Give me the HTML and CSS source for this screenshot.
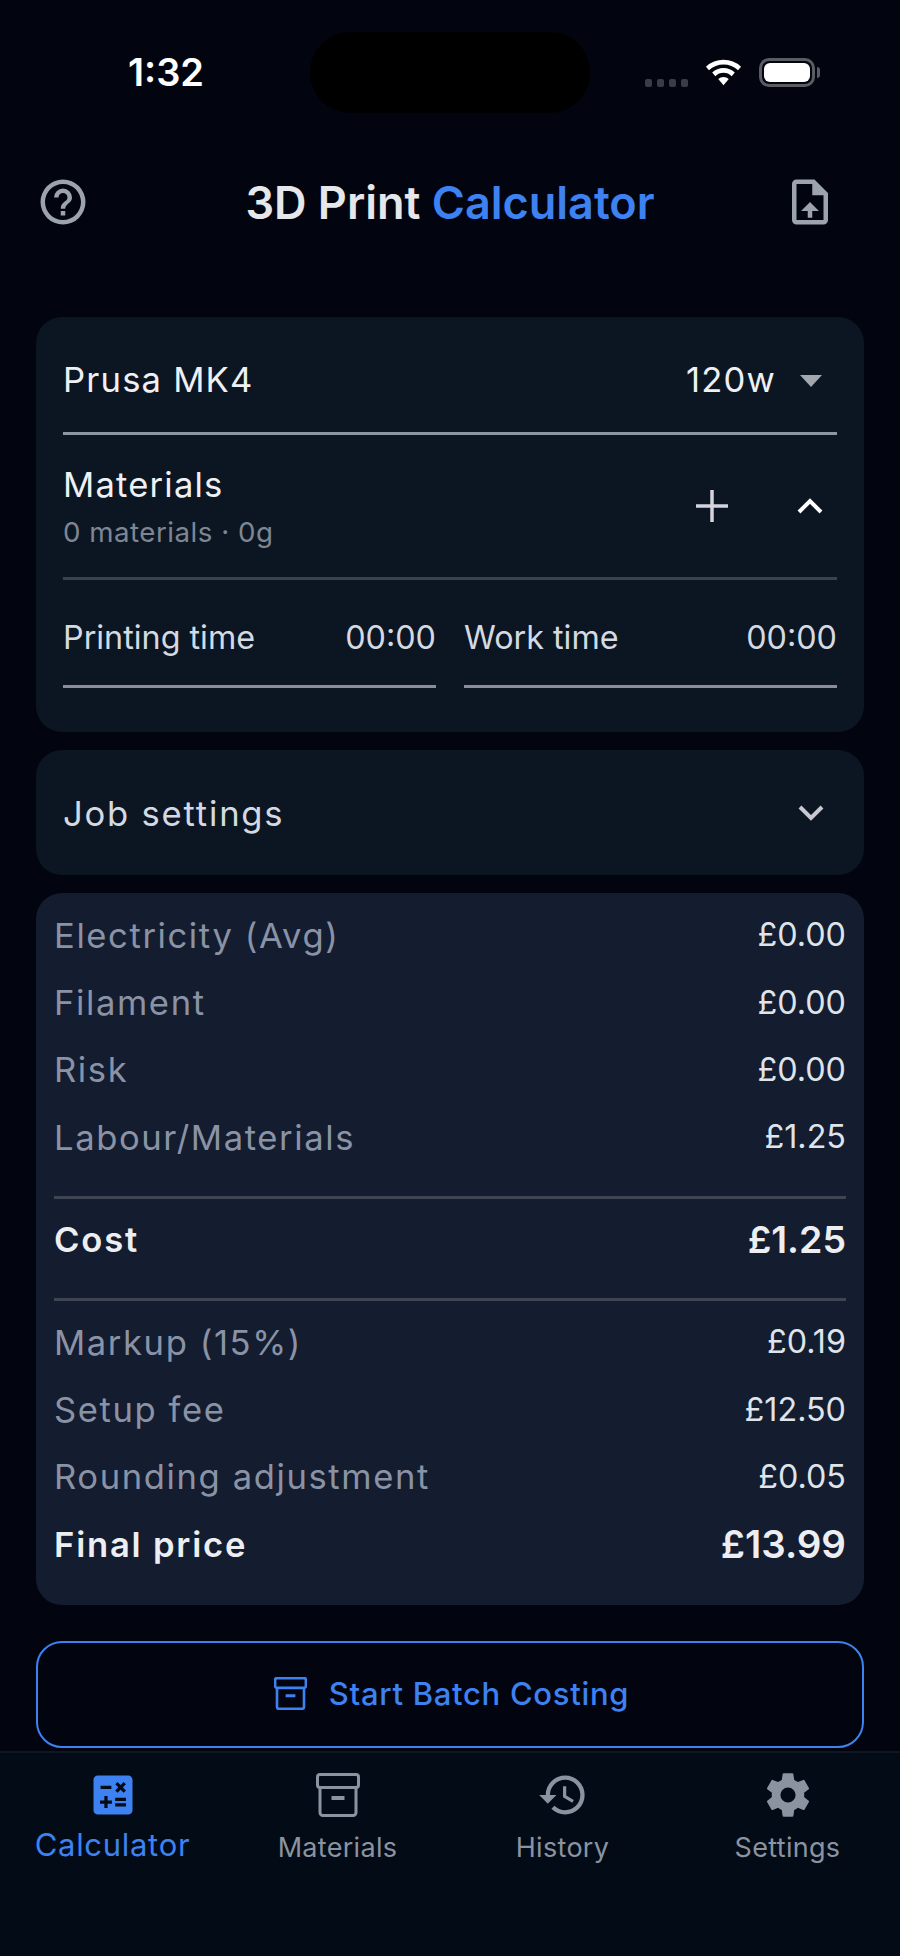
FILE: index.html
```html
<!DOCTYPE html>
<html lang="en">

<head>
    <meta charset="UTF-8">
    <meta name="viewport" content="width=device-width, initial-scale=1.0">
    <title>3D Print Calculator</title>
    <link rel="stylesheet" href="styles.css">
</head>

<body>
    <div class="status-bar">
        <span class="clock">1:32</span>
        <div class="island"></div>
        <div class="status-icons">
            <div class="signal"><i></i><i></i><i></i><i></i></div>
            <svg class="wifi" viewBox="0 0 38 28">
                <path d="M19 27 13.6 20.6a8 8 0 0 1 10.8 0Z" />
                <path d="M19 9.5a17 17 0 0 1 11.6 4.6l-3.2 3.7a12 12 0 0 0-16.8 0l-3.2-3.7A17 17 0 0 1 19 9.5Z" />
                <path d="M19 1a27 27 0 0 1 18 7l-3.1 3.6a22 22 0 0 0-29.8 0L1 8a27 27 0 0 1 18-7Z" />
            </svg>
            <div class="battery"><div class="battery-fill"></div></div>
        </div>
    </div>

    <header class="app-header">
        <svg class="head-icon" viewBox="0 0 24 24">
            <path d="M11,18H13V16H11V18M12,2A10,10 0 0,0 2,12A10,10 0 0,0 12,22A10,10 0 0,0 22,12A10,10 0 0,0 12,2M12,20C7.59,20 4,16.41 4,12C4,7.59 7.59,4 12,4C16.41,4 20,7.59 20,12C20,16.41 16.41,20 12,20M12,6A4,4 0 0,0 8,10H10A2,2 0 0,1 12,8A2,2 0 0,1 14,10C14,12 11,11.75 11,15H13C13,12.75 16,12.5 16,10A4,4 0 0,0 12,6Z" />
        </svg>
        <h1>3D Print <span>Calculator</span></h1>
        <svg class="head-icon head-icon-right" viewBox="0 0 24 24">
            <path d="M14,2H6A2,2 0 0,0 4,4V20A2,2 0 0,0 6,22H18A2,2 0 0,0 20,20V8L14,2M18,20H6V4H13V9H18V20M12,12L8,16H11V19H13V16H16L12,12Z" />
        </svg>
    </header>

    <main class="content">
        <!-- PRINTER / MATERIALS / TIME -->
        <section class="card card-main">
            <div class="printer-row">
                <span>Prusa MK4</span>
                <div class="printer-power">
                    <span>120w</span>
                    <div class="caret"></div>
                </div>
            </div>
            <div class="materials-row">
                <div>
                    <div class="materials-title">Materials</div>
                    <div class="materials-sub">0 materials · 0g</div>
                </div>
                <div class="materials-actions">
                    <svg class="plus" viewBox="0 0 34 34"><path d="M17 1v32M1 17h32" /></svg>
                    <svg class="chevron chevron-up" viewBox="0 0 28 18"><path d="M3 15 14 4l11 11" /></svg>
                </div>
            </div>
            <div class="time-row">
                <div class="time-field"><span>Printing time</span><span>00:00</span></div>
                <div class="time-field"><span>Work time</span><span>00:00</span></div>
            </div>
        </section>

        <!-- JOB SETTINGS -->
        <section class="card card-job">
            <span>Job settings</span>
            <svg class="chevron" viewBox="0 0 28 18"><path d="M3 3l11 11L25 3" /></svg>
        </section>

        <!-- SUMMARY -->
        <section class="summary">
            <div class="line"><span>Electricity (Avg)</span><b>£0.00</b></div>
            <div class="line"><span>Filament</span><b>£0.00</b></div>
            <div class="line"><span>Risk</span><b>£0.00</b></div>
            <div class="line"><span>Labour/Materials</span><b>£1.25</b></div>
            <div class="cost-block">
                <div class="line line-total"><span>Cost</span><b>£1.25</b></div>
            </div>
            <div class="line"><span>Markup (15%)</span><b>£0.19</b></div>
            <div class="line"><span>Setup fee</span><b>£12.50</b></div>
            <div class="line"><span>Rounding adjustment</span><b>£0.05</b></div>
            <div class="line line-total line-final"><span>Final price</span><b>£13.99</b></div>
        </section>

        <button class="batch-btn" type="button">
            <svg class="box-icon batch-icon" viewBox="0 0 44 44">
                <rect x="1.5" y="1.5" width="41" height="13" rx="2.5" />
                <path d="M4 14.5v25a3 3 0 0 0 3 3h30a3 3 0 0 0 3-3v-25" />
                <path class="box-dash" d="M15.5 25h13" />
            </svg>
            Start Batch Costing
        </button>
    </main>

    <nav class="tabs">
        <div class="tab tab-active">
            <svg class="tab-icon" viewBox="0 0 24 24">
                <path d="M19,3H5C3.89,3 3,3.89 3,5V19A2,2 0 0,0 5,21H19A2,2 0 0,0 21,19V5C21,3.89 20.1,3 19,3M13.03,7.06L14.09,6L15.5,7.41L16.91,6L17.97,7.06L16.56,8.47L17.97,9.88L16.91,10.94L15.5,9.54L14.09,10.94L13.03,9.88L14.44,8.47L13.03,7.06M6.25,7.72H11.25V9.22H6.25V7.72M11.5,16H9.5V18H8V16H6V14.5H8V12.5H9.5V14.5H11.5V16M18,17.25H13V15.75H18V17.25M18,14.75H13V13.25H18V14.75Z" />
            </svg>
            <span>Calculator</span>
        </div>
        <div class="tab">
            <svg class="box-icon tab-box" viewBox="0 0 44 44">
                <rect x="1.5" y="1.5" width="41" height="13" rx="2.5" />
                <path d="M4 14.5v25a3 3 0 0 0 3 3h30a3 3 0 0 0 3-3v-25" />
                <path class="box-dash" d="M15.5 25h13" />
            </svg>
            <span>Materials</span>
        </div>
        <div class="tab">
            <svg class="tab-icon" viewBox="0 0 24 24">
                <path d="M13 3a9 9 0 0 0-9 9H1l3.89 3.89.07.14L9 12H6c0-3.87 3.13-7 7-7s7 3.13 7 7-3.13 7-7 7c-1.93 0-3.68-.79-4.94-2.06l-1.42 1.42A8.954 8.954 0 0 0 13 21a9 9 0 0 0 0-18zm-1 5v5l4.28 2.54.72-1.21-3.5-2.08V8H12z" />
            </svg>
            <span>History</span>
        </div>
        <div class="tab">
            <svg class="tab-icon" viewBox="0 0 24 24">
                <path fill-rule="evenodd" d="M12,15.5A3.5,3.5 0 0,1 8.5,12A3.5,3.5 0 0,1 12,8.5A3.5,3.5 0 0,1 15.5,12A3.5,3.5 0 0,1 12,15.5M19.43,12.97C19.47,12.65 19.5,12.33 19.5,12C19.5,11.67 19.47,11.34 19.43,11L21.54,9.37C21.73,9.22 21.78,8.95 21.66,8.73L19.66,5.27C19.54,5.05 19.27,4.96 19.05,5.05L16.56,6.05C16.04,5.66 15.5,5.32 14.87,5.07L14.5,2.42C14.46,2.18 14.25,2 14,2H10C9.75,2 9.54,2.18 9.5,2.42L9.13,5.07C8.5,5.32 7.96,5.66 7.44,6.05L4.95,5.05C4.73,4.96 4.46,5.05 4.34,5.27L2.34,8.73C2.21,8.95 2.27,9.22 2.46,9.37L4.57,11C4.53,11.34 4.5,11.67 4.5,12C4.5,12.33 4.53,12.65 4.57,12.97L2.46,14.63C2.27,14.78 2.21,15.05 2.34,15.27L4.34,18.73C4.46,18.95 4.73,19.03 4.95,18.95L7.44,17.94C7.96,18.34 8.5,18.68 9.13,18.93L9.5,21.58C9.54,21.82 9.75,22 10,22H14C14.25,22 14.46,21.82 14.5,21.58L14.87,18.93C15.5,18.67 16.04,18.34 16.56,17.94L19.05,18.95C19.27,19.03 19.54,18.95 19.66,18.73L21.66,15.27C21.78,15.05 21.73,14.78 21.54,14.63L19.43,12.97Z" />
            </svg>
            <span>Settings</span>
        </div>
    </nav>
</body>

</html>
```

FILE: styles.css
```css
* {
    margin: 0;
    padding: 0;
    box-sizing: border-box;
    font-family: 'Inter', 'Liberation Sans', sans-serif;
}

body {
    width: 900px;
    height: 1956px;
    overflow: hidden;
    display: flex;
    flex-direction: column;
    background-color: #02050f;
    color: #e5e7eb;
}

/* STATUS BAR */
.status-bar {
    height: 144px;
    flex-shrink: 0;
    padding: 0 85px 0 128px;
    display: flex;
    justify-content: space-between;
    align-items: center;
    position: relative;
}

.clock {
    font-size: 38px;
    font-weight: 600;
    color: #fff;
}

.island {
    position: absolute;
    top: 32px;
    left: 310px;
    width: 280px;
    height: 81px;
    border-radius: 40px;
    background-color: #000;
}

.status-icons {
    display: flex;
    align-items: center;
}

.signal {
    display: flex;
    gap: 4.5px;
    margin: 21px 17px 0 0;
}

.signal i {
    width: 7.5px;
    height: 8px;
    border-radius: 2px;
    background-color: #3a3d45;
}

.wifi {
    width: 37px;
    height: 29px;
    fill: #fff;
    margin-right: 17px;
}

.battery {
    width: 56px;
    height: 29px;
    border: 3px solid #5a5c63;
    border-radius: 10px;
    padding: 2px;
    position: relative;
}

.battery::after {
    content: '';
    position: absolute;
    top: 6px;
    right: -8px;
    width: 3px;
    height: 11px;
    border-radius: 0 4px 4px 0;
    background-color: #5a5c63;
}

.battery-fill {
    height: 100%;
    width: 100%;
    border-radius: 6px;
    background-color: #fff;
}

/* HEADER */
.app-header {
    height: 60px;
    margin-top: 28px;
    flex-shrink: 0;
    padding: 0 36px;
    display: grid;
    grid-template-columns: 1fr auto 1fr;
    align-items: center;
}

.app-header h1 {
    font-size: 45px;
    font-weight: 600;
    color: #e5e7eb;
}

.app-header h1 span {
    color: #3d82f0;
}

.head-icon {
    width: 54px;
    height: 54px;
    fill: #9ca3af;
}

.head-icon-right {
    justify-self: end;
    margin-right: 27px;
}

/* CARDS */
.content {
    flex: 1;
    padding: 85px 36px 0;
    display: flex;
    flex-direction: column;
}

.card {
    background-color: #0b1622;
    border-radius: 26px;
}

.card-main {
    height: 415px;
    padding: 0 27px;
    font-size: 34.6px;
    letter-spacing: 1.2px;
}

.printer-row {
    height: 118px;
    padding-top: 9px;
    display: flex;
    justify-content: space-between;
    align-items: center;
    border-bottom: 3px solid #8f96a3;
    color: #eef0f4;
}

.printer-power {
    display: flex;
    align-items: center;
    gap: 24px;
    padding-right: 15px;
}

.caret {
    width: 0;
    height: 0;
    margin-top: 3px;
    border-left: 11px solid transparent;
    border-right: 11px solid transparent;
    border-top: 12px solid #a3a7ae;
}

.materials-row {
    height: 145px;
    display: flex;
    justify-content: space-between;
    align-items: center;
    border-bottom: 3px solid #39424f;
}

.materials-title {
    color: #eef0f4;
}

.materials-sub {
    font-size: 27.7px;
    letter-spacing: 0.5px;
    color: #7e8694;
    margin-top: 10px;
}

.materials-actions {
    display: flex;
    align-items: center;
    gap: 67px;
    padding-right: 13px;
}

.plus {
    width: 34px;
    height: 34px;
    fill: none;
    stroke: #d5d3dc;
    stroke-width: 3.5;
}

.chevron {
    width: 28px;
    height: 18px;
    fill: none;
    stroke: #c9c8d2;
    stroke-width: 4;
}

.chevron-up {
    stroke: #fff;
}

.time-row {
    display: flex;
    gap: 28px;
}

.time-field {
    flex: 1;
    height: 108px;
    padding-top: 9px;
    display: flex;
    justify-content: space-between;
    align-items: center;
    font-size: 32.3px;
    letter-spacing: 0;
    color: #d5dae2;
    border-bottom: 3px solid #8f8b9b;
}

.card-job {
    height: 125px;
    margin-top: 18px;
    padding: 0 39px 0 27px;
    display: flex;
    justify-content: space-between;
    align-items: center;
    font-size: 34.6px;
    letter-spacing: 1.8px;
    color: #d5dae2;
}

/* SUMMARY */
.summary {
    height: 712px;
    margin-top: 18px;
    padding: 8px 18px 0;
    background-color: #141c30;
    border-radius: 26px;
}

.line {
    height: 67.4px;
    display: flex;
    justify-content: space-between;
    align-items: center;
    font-size: 34.6px;
    letter-spacing: 1.6px;
    color: #8a93a6;
}

.line b {
    font-size: 32.3px;
    font-weight: 400;
    letter-spacing: 0;
    color: #dfe3ea;
}

.line-total span {
    font-weight: 600;
    letter-spacing: 1.8px;
    color: #eceef2;
}

.line-total b {
    font-size: 37.5px;
    font-weight: 600;
    color: #eceef2;
}

.line-final b {
    font-size: 38.5px;
}

.cost-block {
    margin: 25px 0 7px;
    padding: 7px 0 25px;
    border-top: 3px solid #3f4452;
    border-bottom: 3px solid #3f4452;
}

.batch-btn {
    height: 107px;
    margin-top: 36px;
    padding: 0 0 3px 3px;
    flex-shrink: 0;
    display: flex;
    justify-content: center;
    align-items: center;
    gap: 22px;
    border: 2px solid #3d82f0;
    border-radius: 26px;
    background-color: transparent;
    color: #3d82f0;
    font-size: 31px;
    font-weight: 500;
    letter-spacing: 0.7px;
}

.box-icon {
    fill: none;
    stroke-width: 3;
}

.box-dash {
    stroke-width: 4;
}

.batch-icon {
    width: 33px;
    height: 33px;
    stroke: #3d82f0;
    stroke-width: 3.5;
}

/* TABS */
.tabs {
    height: 205px;
    flex-shrink: 0;
    display: grid;
    grid-template-columns: repeat(4, 1fr);
    padding-top: 16px;
    background-color: #030b16;
    border-top: 2px solid #0f1722;
}

.tab {
    display: flex;
    flex-direction: column;
    align-items: center;
    gap: 10px;
    font-size: 27px;
    letter-spacing: 0.3px;
    color: #8b93a1;
}

.tab-icon {
    width: 52px;
    height: 52px;
    fill: #8b93a1;
}

.tab-box {
    width: 44px;
    height: 44px;
    margin: 4px;
    stroke: #8b93a1;
}

.tab-active {
    gap: 5px;
    color: #3d82f0;
    font-size: 31px;
    letter-spacing: 0.7px;
}

.tab-active .tab-icon {
    fill: #3d82f0;
}
```
